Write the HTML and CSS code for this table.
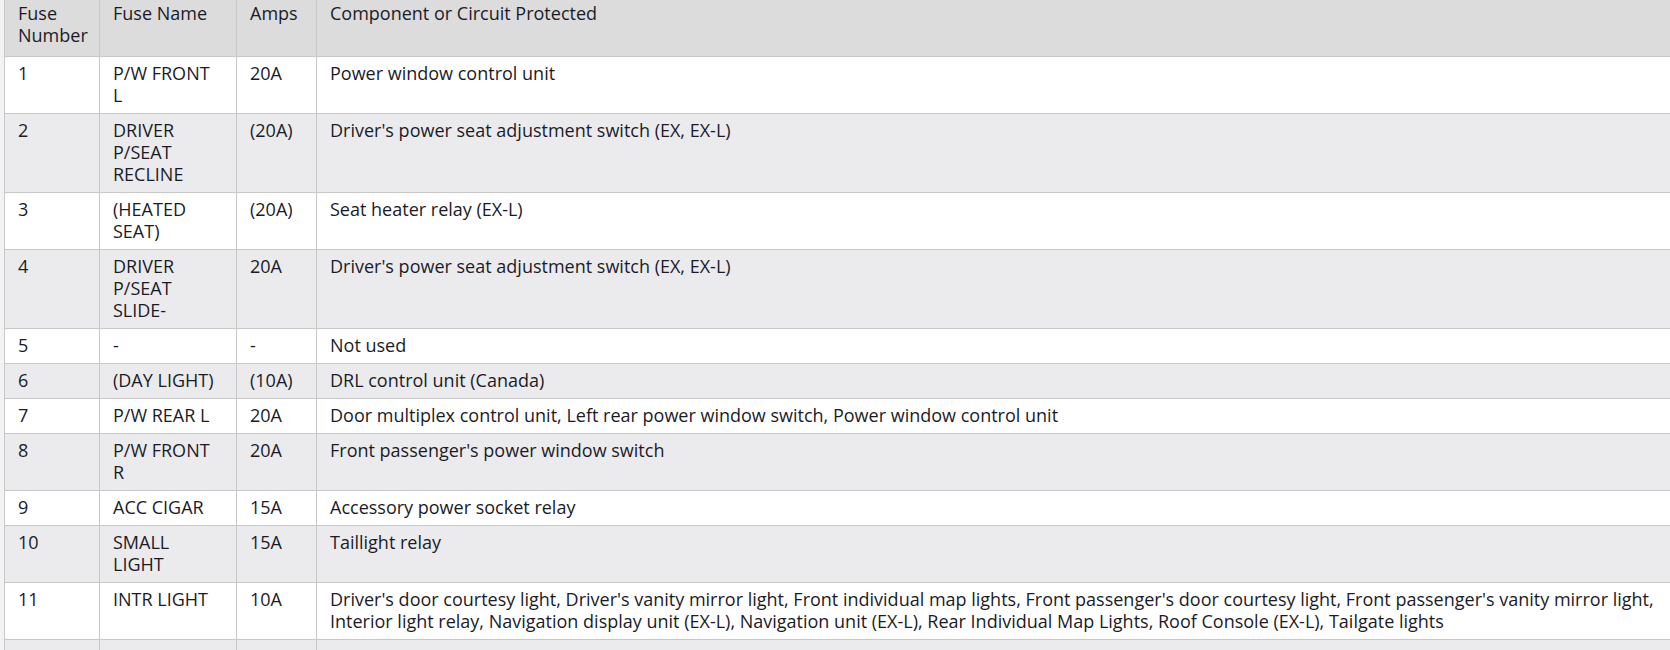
FILE: index.html
```html
<!DOCTYPE html>
<html lang="en">
<head>
<meta charset="utf-8">
<title>Fuse table</title>
<link rel="stylesheet" href="styles.css">
</head>
<body>
<div class="page">
<table class="fuse-table">
<thead>
<tr><th class="c-num">Fuse Number</th><th class="c-name">Fuse Name</th><th class="c-amps">Amps</th><th class="c-desc">Component or Circuit Protected</th></tr>
</thead>
<tbody>
<tr><td>1</td><td>P/W FRONT L</td><td>20A</td><td>Power window control unit</td></tr>
<tr><td>2</td><td>DRIVER P/SEAT RECLINE</td><td>(20A)</td><td>Driver's power seat adjustment switch (EX, EX-L)</td></tr>
<tr><td>3</td><td>(HEATED SEAT)</td><td>(20A)</td><td>Seat heater relay (EX-L)</td></tr>
<tr><td>4</td><td>DRIVER P/SEAT SLIDE-</td><td>20A</td><td>Driver's power seat adjustment switch (EX, EX-L)</td></tr>
<tr><td>5</td><td>-</td><td>-</td><td>Not used</td></tr>
<tr><td>6</td><td>(DAY LIGHT)</td><td>(10A)</td><td>DRL control unit (Canada)</td></tr>
<tr><td>7</td><td>P/W REAR L</td><td>20A</td><td>Door multiplex control unit, Left rear power window switch, Power window control unit</td></tr>
<tr><td>8</td><td>P/W FRONT R</td><td>20A</td><td>Front passenger's power window switch</td></tr>
<tr><td>9</td><td>ACC CIGAR</td><td>15A</td><td>Accessory power socket relay</td></tr>
<tr><td>10</td><td>SMALL LIGHT</td><td>15A</td><td>Taillight relay</td></tr>
<tr><td>11</td><td>INTR LIGHT</td><td>10A</td><td>Driver's door courtesy light, Driver's vanity mirror light, Front individual map lights, Front passenger's door courtesy light, Front passenger's vanity mirror light, Interior light relay, Navigation display unit (EX-L), Navigation unit (EX-L), Rear Individual Map Lights, Roof Console (EX-L), Tailgate lights</td></tr>
<tr class="row-empty"><td></td><td></td><td></td><td></td></tr>
</tbody>
</table>
</div>
</body>
</html>
```
FILE: styles.css
```css
html, body {
  margin: 0;
  padding: 0;
  overflow: hidden;
  background: #f3f3f3;
}
.page {
  padding-left: 4px;
  width: 1700px;
}
.fuse-table {
  border-collapse: collapse;
  width: 1672px;
  table-layout: fixed;
  font-family: "Open Sans", sans-serif;
  font-size: 18px;
  line-height: 22px;
  color: #1b1b28;
}
.fuse-table th,
.fuse-table td {
  box-sizing: border-box;
  border: 1px solid #c8c8c8;
  text-align: left;
  vertical-align: top;
  font-weight: normal;
  padding: 5px 13px 7px;
}
.fuse-table th {
  background: #dcdcdc;
  border-top: 0;
  padding: 2px 13px 10px;
}
.fuse-table tbody tr:nth-child(odd) td { background: #ffffff; }
.fuse-table tbody tr:nth-child(even) td { background: #ebebed; }
.row-empty td { height: 35px; }
.c-num { width: 95px; }
.c-name { width: 137px; }
.c-amps { width: 80px; }
```
